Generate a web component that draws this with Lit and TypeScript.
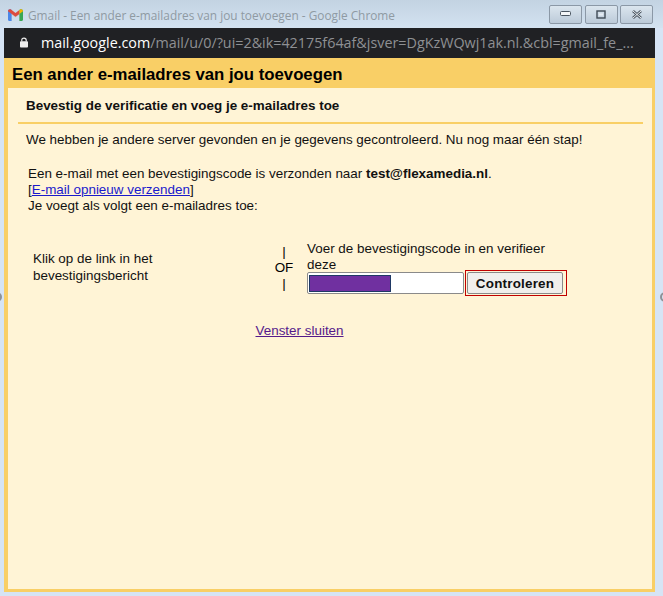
import { LitElement, html, css } from "lit";
import { customElement } from "lit/decorators.js";

@customElement("app-root")
export class AppRoot extends LitElement {
  static styles = css`
    :host {
      display: block;
      width: 663px;
      height: 596px;
      overflow: hidden;
      position: relative;
      font-family: "Liberation Sans", Arial, sans-serif;
      color: #111;
      background: #d6e4f5;
    }
    .frame { display: flex; flex-direction: column; height: 596px; padding: 0 8px 4px 4px; box-sizing: border-box; }
    .titlebar {
      margin: 0 -8px 0 -4px;
      height: 28px;
      flex: none;
      display: flex;
      align-items: center;
      padding: 2px 10px 0 8px;
      box-sizing: border-box;
      gap: 5px;
      background: linear-gradient(#c3d3e2, #d3e2f0);
    }
    .tt { font: 11.85px "Open Sans", sans-serif; color: #8f9aa3; flex: 1; white-space: nowrap; }
    .wbtns { display: flex; gap: 2.5px; margin-top: -2px; }
    .wbtn {
      width: 33px; height: 19px; box-sizing: border-box;
      border: 1px solid #8b98a6; border-radius: 2px;
      background: linear-gradient(#dbe5ee, #bccbd9);
      display: flex; align-items: center; justify-content: center;
    }
    .urlbar {
      height: 30px; flex: none; background: #202124; display: flex; align-items: center;
      padding: 0 0 2px 16px; box-sizing: border-box; white-space: nowrap; overflow: hidden;
      font: 14.34px "Open Sans", sans-serif; color: #8e9093; gap: 13px;
    }
    .urlbar b { color: #fff; font-weight: 400; }
    .head {
      height: 30px; flex: none; background: #f9cf66; font-size: 16.75px; font-weight: 700;
      color: #000; display: flex; align-items: center; padding: 3px 0 0 8px; box-sizing: border-box;
    }
    .panelwrap { flex: 1; background: #f9cf66; padding: 0 3px 3px 4px; display: flex; min-height: 0; }
    .panel { flex: 1; background: #fff4d6; padding: 0 9px 0 10px; font-size: 13.43px; display: flex; flex-direction: column; }
    .sub {
      font-weight: 700; color: #111; height: 34px; padding: 0 0 0 8px; border-bottom: 2px solid #f9cf66;
      display: flex; align-items: center; flex: none;
    }
    .intro { margin: 8px 0 0 8px; line-height: 16px; white-space: nowrap; }
    .info { margin: 18px 0 0 10px; line-height: 16px; }
    .info a { color: #1a1acc; }
    .row { display: flex; margin: 27px 0 0 15px; }
    .left { width: 132px; margin-top: 10px; line-height: 16.5px; flex: none; }
    .of { width: 38px; margin-left: 100px; flex: none; display: flex; flex-direction: column; align-items: center; line-height: 16px; margin-top: 3px; color: #000; }
    .right { margin-left: 4px; width: 262px; line-height: 16px; }
    .code { display: flex; align-items: center; margin-top: -3px; }
    .field {
      width: 157px; height: 22px; box-sizing: border-box; background: #fff; border: 1px solid #8a8a8a;
      border-radius: 2px; padding: 2px 1px 1px; display: flex;
    }
    .mask { width: 82px; background: #7030a0; border: 1px solid #1f3864; box-sizing: border-box; }
    .hl { margin-left: 1px; border: 1px solid #c00000; padding: 1px 3px 1px 1px; display: flex; }
    button {
      width: 96px; height: 22px; padding: 0; border: 1px solid #8a8a8a; border-radius: 2px; background: #f0efec;
      font: 700 13.43px "Liberation Sans", Arial, sans-serif; color: #111; letter-spacing: 0.2px;
    }
    .close { margin: 27px 0 0 237.5px; }
    .close a { color: #551a8b; }
    .edge { position: absolute; top: 292px; width: 10px; height: 10px; border: 2px solid #8e9298; border-radius: 50%; box-sizing: border-box; }
    .edge.l { left: -8px; }
    .edge.r { right: -7px; }
  `;

  render() {
    return html`
      <div class="frame">
        <div class="titlebar">
          <svg width="15" height="12" viewBox="0 0 15 12">
            <path d="M1 12V2.500L7.500 7 14 2.500V12h-2.600V5.500L7.500 8.400 3.600 5.500V12z" fill="#c9c9c9" />
            <path d="M0 2.200C0 .6 1.600-.4 3 .6L3.600 1v11H1.200C.5 12 0 11.500 0 10.800z" fill="#4a87e8" />
            <path d="M11.400 12V1l.6-.4c1.400-1 3-.0 3 1.600v8.600c0 .7-.5 1.200-1.200 1.200z" fill="#38a754" />
            <path d="M0 2.200 7.500 7.800 11.400 4.900V1L7.500 3.900 3 .6C1.600-.4 0 .6 0 2.200z" fill="#dd4b3e" />
            <path d="M11.400 1v3.900L15 2.200C15 .6 13.400-.4 12 .6z" fill="#f4b400" />
          </svg>
          <div class="tt">Gmail - Een ander e-mailadres van jou toevoegen - Google Chrome</div>
          <div class="wbtns">
            <div class="wbtn"><svg width="12" height="6"><rect x="0.5" y="0.500" width="10" height="4" rx="1" fill="#f4f6f8" stroke="#4a5560" /></svg></div>
            <div class="wbtn"><svg width="11" height="9"><rect x="1" y="1" width="8" height="7" fill="none" stroke="#3f4a55" stroke-width="1.400" /><rect x="3" y="3.500" width="4" height="2" fill="#e8eef4" /></svg></div>
            <div class="wbtn"><svg width="12" height="9"><path d="M2 1l8 7M10 1L2 8" stroke="#4a5560" stroke-width="2.600" /><path d="M2 1l8 7M10 1L2 8" stroke="#eef2f6" stroke-width="1" /></svg></div>
          </div>
        </div>
        <div class="urlbar">
          <svg width="8" height="11" viewBox="0 0 9 12"><path d="M2 5V3.500a2.500 2.500 0 0 1 5 0V5" fill="none" stroke="#eee" stroke-width="1.300" /><rect y="4.500" width="9" height="7" rx="1" fill="#eee" /></svg>
          <span><b>mail.google.com</b>/mail/u/0/?ui=2&amp;ik=42175f64af&amp;jsver=DgKzWQwj1ak.nl.&amp;cbl=gmail_fe_...</span>
        </div>
        <div class="head">Een ander e-mailadres van jou toevoegen</div>
        <div class="panelwrap">
          <div class="panel">
            <div class="sub">Bevestig de verificatie en voeg je e-mailadres toe</div>
            <p class="intro">We hebben je andere server gevonden en je gegevens gecontroleerd. Nu nog maar één stap!</p>
            <div class="info">
              Een e-mail met een bevestigingscode is verzonden naar <b>test@flexamedia.nl</b>.<br />
              [<a href="#">E-mail opnieuw verzenden</a>]<br />
              Je voegt als volgt een e-mailadres toe:
            </div>
            <div class="row">
              <div class="left">Klik op de link in het bevestigingsbericht</div>
              <div class="of"><span>|</span><span>OF</span><span>|</span></div>
              <div class="right">
                Voer de bevestigingscode in en verifieer deze
                <div class="code">
                  <div class="field"><div class="mask"></div></div>
                  <div class="hl"><button>Controleren</button></div>
                </div>
              </div>
            </div>
            <div class="close"><a href="#">Venster sluiten</a></div>
          </div>
        </div>
      </div>
      <div class="edge l"></div>
      <div class="edge r"></div>
    `;
  }
}
